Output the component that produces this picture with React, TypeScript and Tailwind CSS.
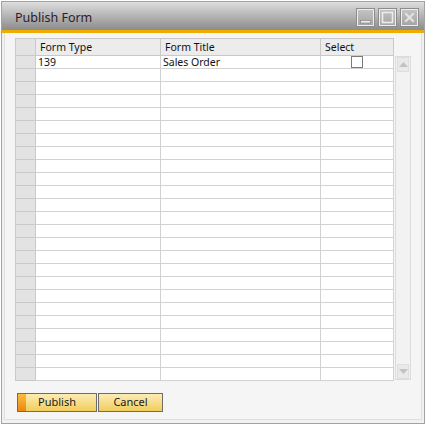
import React from 'react'

const rows = Array.from({ length: 25 }, (_, i) => i)

function WinButton({ kind }: { kind: 'min' | 'max' | 'close' }) {
  return (
    <div className="w-[19px] h-[19px] border border-[#8c8c8c] bg-gradient-to-b from-[#c4c4c4] to-[#a4a4a4] shadow-[inset_0_0_0_1px_#ededed] flex items-center justify-center">
      <svg width="13" height="13" viewBox="0 0 13 13">
        {kind === 'min' && (
          <rect x="1.5" y="9.5" width="10" height="2.5" fill="#ececec" stroke="#7d7d7d" strokeWidth="0.6" />
        )}
        {kind === 'max' && (
          <rect x="1.5" y="1.5" width="10" height="10" fill="none" stroke="#ececec" strokeWidth="1.6" />
        )}
        {kind === 'close' && (
          <g stroke="#e2e2e2" strokeWidth="2.2" strokeLinecap="square">
            <path d="M3 3 L10 10 M10 3 L3 10" />
          </g>
        )}
      </svg>
    </div>
  )
}

function Arrow({ up }: { up: boolean }) {
  return (
    <div className="h-[15px] mx-[1px] bg-[#e9e9e9] border border-[#dedede] flex items-center justify-center">
      <svg width="9" height="5" viewBox="0 0 9 5">
        {up ? <path d="M0 5 L4.5 0 L9 5 Z" fill="#c2c2c2" /> : <path d="M0 0 L4.5 5 L9 0 Z" fill="#c2c2c2" />}
      </svg>
    </div>
  )
}

export default function App() {
  return (
    <div className="w-[427px] h-[426px] bg-white p-px font-['Noto_Sans',sans-serif]">
      <div className="w-[424px] h-[423px] border border-[#a2a2a2] flex flex-col bg-[#f1f1f1]">
        {/* Title bar */}
        <div className="h-[28px] flex justify-between pl-[13px] pr-[5px] bg-gradient-to-b from-[#dedede] via-[#b4b4b4] to-[#8c8c8c]">
          <span className="text-[12.5px] leading-[32px] text-[#2d1a2d]">Publish Form</span>
          <div className="flex gap-[3px] pt-[6px]">
            <WinButton kind="min" />
            <WinButton kind="max" />
            <WinButton kind="close" />
          </div>
        </div>
        <div className="h-[3px] bg-[#f0ac00]" />

        {/* Content */}
        <div className="flex-1 flex px-[2px] pb-[3px]">
          <div className="flex-1 flex flex-col border-x border-b border-[#dfdfdf] bg-[#f5f5f5] pt-[5px] pl-[10px]">
            <div className="flex">
              {/* Grid */}
              <div className="border-l border-t border-[#c9c9c9] text-[10.5px] text-[#111]">
                <div className="flex h-[17px] bg-[#ececec]">
                  <div className="w-[20px] bg-[#e3e3e3] border-r border-b border-[#c9c9c9]" />
                  <div className="w-[125px] border-r border-b border-[#c9c9c9] pl-[4px] leading-[16px]">Form Type</div>
                  <div className="w-[160px] border-r border-b border-[#c9c9c9] pl-[4px] leading-[16px]">Form Title</div>
                  <div className="w-[73px] border-r border-b border-[#c9c9c9] pl-[4px] leading-[16px]">Select</div>
                </div>
                {rows.map((i) => (
                  <div key={i} className="flex h-[13px] bg-white">
                    <div className="w-[20px] bg-[#e3e3e3] border-r border-b border-[#c9c9c9]" />
                    <div className="w-[125px] border-r border-b border-[#d2d2d2] pl-[2px] leading-[13px]">
                      {i === 0 ? '139' : ''}
                    </div>
                    <div className="w-[160px] border-r border-b border-[#d2d2d2] pl-[2px] leading-[13px]">
                      {i === 0 ? 'Sales Order' : ''}
                    </div>
                    <div className="w-[73px] border-r border-b border-[#d2d2d2] flex justify-center">
                      {i === 0 && <div className="w-[12px] h-[12px] border border-[#7a7a7a] bg-white" />}
                    </div>
                  </div>
                ))}
              </div>

              {/* Scrollbar */}
              <div className="w-[16px] ml-[1px] mt-[18px] h-[324px] border border-[#dcdcdc] bg-[#f2f2f2] flex flex-col justify-between">
                <Arrow up />
                <Arrow up={false} />
              </div>
            </div>

            {/* Buttons */}
            <div className="flex gap-[1px] mt-[12px] ml-[2px] text-[11px] text-[#1a1a1a]">
              <button className="relative w-[80px] h-[19px] border border-[#6c6c6c] bg-gradient-to-b from-[#fcecb4] to-[#f2cd5a] flex items-center justify-center">
                <span className="absolute left-0 top-0 bottom-0 w-[8px] bg-gradient-to-b from-[#f9bd3c] to-[#ec8710]" />
                Publish
              </button>
              <button className="w-[65px] h-[19px] border border-[#6c6c6c] bg-gradient-to-b from-[#fcecb4] to-[#f2cd5a] flex items-center justify-center">
                Cancel
              </button>
            </div>
          </div>
        </div>
      </div>
    </div>
  )
}
